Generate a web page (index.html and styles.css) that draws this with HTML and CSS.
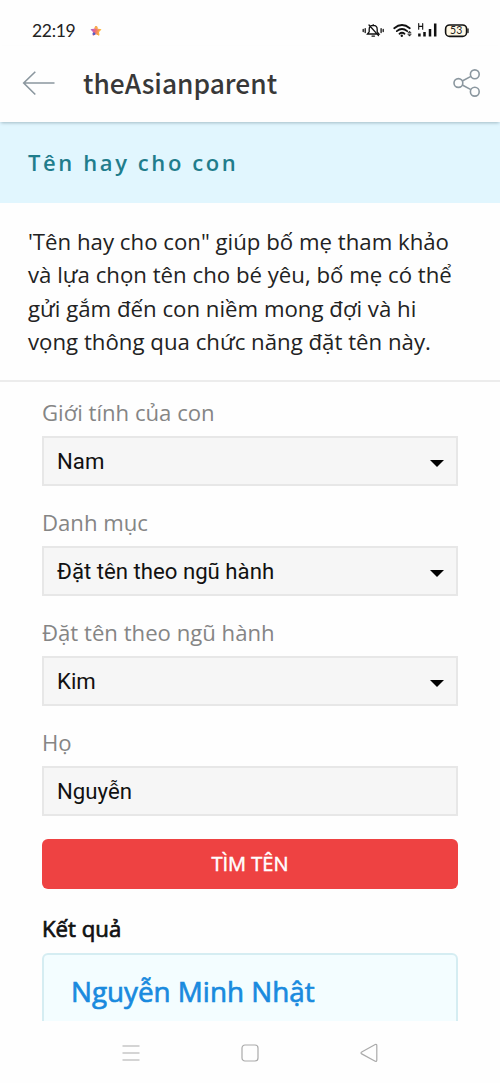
FILE: index.html
```html
<!DOCTYPE html>
<html lang="vi">
<head>
<meta charset="utf-8">
<title>theAsianparent</title>
<link rel="stylesheet" href="styles.css">
</head>
<body>
<div class="status">
  <span class="time">22:19</span>
  <svg class="star" width="12" height="12" viewBox="0 0 12 12"><defs><linearGradient id="sg" x1="0" y1="0" x2="1" y2="0.3"><stop offset="0" stop-color="#8a5be0"/><stop offset=".45" stop-color="#e8628a"/><stop offset="1" stop-color="#ffb62e"/></linearGradient></defs><path d="M6 1.3 7.4 4.2 10.8 4.6 8.5 7 9 10.2 6 8.8 3 10.2 3.5 7 1.2 4.6 4.6 4.2Z" fill="url(#sg)" stroke="url(#sg)" stroke-width="1" stroke-linejoin="round"/><circle cx="6.1" cy="2.5" r="1.5" fill="#f9ad49"/><circle cx="4" cy="8.8" r="1.4" fill="#4e5fc9"/></svg>
  <svg class="sys" width="110" height="20" viewBox="0 0 110 20" fill="none" stroke="#111" stroke-linecap="round">
    <path d="M6.5 14 8.2 11.8V9.2Q8.2 5.6 12.2 5.4 16.2 5.6 16.2 9.2V11.8L18 14ZM11 16.1H13.5M8 5 17.5 15.6M12.2 4.6V5M4.2 8.6V12.6M2.2 9.5V11.6M20.1 8.6V12.6M22.2 9.5V11.6" stroke-width="1.3"/>
    <path d="M33.2 8.2Q41 1.8 48.8 8.2M35.8 11.1Q41 7 46.2 11.1M38.5 13.7Q41 11.8 43.5 13.7" stroke-width="1.8"/>
    <circle cx="40.8" cy="15.7" r="1.2" fill="#111" stroke="none"/>
    <path d="M47 12.8 48.5 11.1 50 12.8ZM47 14.5 48.5 16.2 50 14.5Z" fill="#111" stroke="#111" stroke-width=".5"/>
    <path d="M57.7 3.5V9.2M61.7 3.5V9.2M57.7 6.4H61.7" stroke-width="1.1"/>
    <path d="M58.4 13.5V16.5M63.5 12V16.5M69 9V16.5M74.2 3.5V16.5" stroke-width="2.5" stroke-linecap="butt"/>
    <rect x="84.6" y="5" width="21" height="11.4" rx="4" fill="#fff8e5" stroke-width="1.6"/>
    <path d="M107 9V12.5" stroke-width="1.3"/>
    <text x="95.3" y="14.3" text-anchor="middle" class="batt">53</text>
  </svg>
</div>
<header class="bar">
  <svg class="back" width="34" height="26" viewBox="0 0 34 26" fill="none" stroke="#8b979f" stroke-width="1.6"><path d="M32.5 13H1.5M13.3 1.7 1.7 13 13.3 24.5"/></svg>
  <h1 class="brand">theAsianparent</h1>
  <svg class="share" width="28" height="28" viewBox="0 0 28 28" fill="none" stroke="#8b979f" stroke-width="1.6"><circle cx="5.4" cy="14" r="4.4"/><circle cx="21.8" cy="5.3" r="4.4"/><circle cx="21.8" cy="22.7" r="4.4"/><path d="M9.3 12 17.9 7.4M9.3 16 17.9 20.6"/></svg>
</header>
<div class="heading"><h2 class="heading-text">Tên hay cho con</h2></div>
<div class="intro">
  <div>'Tên hay cho con" giúp bố mẹ tham khảo</div>
  <div>và lựa chọn tên cho bé yêu, bố mẹ có thể</div>
  <div>gửi gắm đến con niềm mong đợi và hi</div>
  <div>vọng thông qua chức năng đặt tên này.</div>
</div>
<main class="form">
  <div class="label"><span>Giới tính của con</span></div>
  <div class="field"><span>Nam</span><i class="caret"></i></div>
  <div class="label"><span>Danh mục</span></div>
  <div class="field"><span>Đặt tên theo ngũ hành</span><i class="caret"></i></div>
  <div class="label"><span>Đặt tên theo ngũ hành</span></div>
  <div class="field"><span>Kim</span><i class="caret"></i></div>
  <div class="label"><span>Họ</span></div>
  <div class="field"><span>Nguyễn</span></div>
  <div class="button"><span>TÌM TÊN</span></div>
  <div class="result-title"><span>Kết quả</span></div>
  <div class="result"><span>Nguyễn Minh Nhật</span></div>
</main>
<nav class="nav">
  <svg width="18" height="18" viewBox="0 0 18 18" fill="none" stroke="#aaa" stroke-width="1.2"><path d="M.5 2H17.5M.5 9H17.5M.5 16H17.5"/></svg>
  <svg width="18" height="18" viewBox="0 0 18 18" fill="none" stroke="#aaa" stroke-width="1.2"><rect x="1" y="1" width="16" height="16" rx="3"/></svg>
  <svg width="18" height="20" viewBox="0 0 18 20" fill="none" stroke="#aaa" stroke-width="1.2" stroke-linejoin="round"><path d="M15.2 1.5 1.7 9Q.3 10 1.7 10.9L15.2 18.3Q16.8 18.8 16.8 17V2.6Q16.8 1 15.2 1.5Z"/></svg>
</nav>
</body>
</html>
```
FILE: styles.css
```css
* { box-sizing: border-box; }
body { margin: 0; width: 500px; height: 1083px; overflow: hidden; background: #fefefe; font-family: "Open Sans", "Noto Sans", sans-serif; display: flex; flex-direction: column; }
h1, h2 { margin: 0; }
.status { height: 46px; flex: none; display: flex; align-items: flex-start; padding: 20px 29px 0 32px; }
.time { font: 17.5px/21px Lato, sans-serif; letter-spacing: -.3px; color: #222; width: 58px; }
.star { margin-top: 5px; }
.sys { margin-left: auto; }
.batt { font: 10.5px Lato, sans-serif; letter-spacing: .3px; fill: #222; stroke: none; }
.bar { height: 76px; flex: none; display: flex; align-items: center; padding: 0 19px 2px 22px; background: #fefefe; box-shadow: 0 2px 3px -1px rgba(70,100,115,.4); position: relative; }
.brand { margin-left: 27px; font: 500 26.35px/38px "Noto Sans CJK SC", sans-serif; color: #383838; white-space: nowrap; }
.share { margin-left: auto; }
.heading { height: 81px; flex: none; background: #e1f6fe; padding: 24px 28px; }
.heading-text { font: 600 22px/32px "Open Sans", sans-serif; letter-spacing: 2.6px; color: #1f7d8c; white-space: nowrap; }
.intro { height: 179px; flex: none; padding: 22px 28px 0; border-bottom: 2px solid #ececec; font-size: 22.22px; line-height: 33.3px; color: #222; white-space: nowrap; }
.form { height: 639px; flex: none; overflow: hidden; padding: 0 42px; white-space: nowrap; }
.label { height: 54px; padding-top: 14px; font-size: 22.15px; line-height: 32px; color: #858585; }
.field + .label { height: 60px; padding-top: 20px; }
.field { height: 50px; border: 2px solid #e7e7e7; background: #f6f6f6; display: flex; align-items: center; justify-content: space-between; padding: 0 12px 0 13px; font: 22.2px/30px Roboto, sans-serif; color: #111; }
.caret { border: 7px solid transparent; border-top-color: #000; border-bottom: 0; margin-top: 4px; }
.button { height: 50px; margin-top: 23px; border-radius: 6px; background: #ee4242; color: #fff; text-align: center; font-size: 20px; line-height: 50px; -webkit-text-stroke: .5px #fff; }
.result-title { height: 64px; padding-top: 24px; font-size: 22.2px; line-height: 32px; color: #111; -webkit-text-stroke: .7px #111; }
.result { height: 100px; border: 2px solid #d5edf2; border-radius: 6px; background: #f3fdff; padding: 15px 27px; font-size: 27.8px; line-height: 42px; color: #198ade; -webkit-text-stroke: .7px #198ade; }
.nav { height: 62px; flex: none; display: flex; justify-content: space-between; align-items: center; padding: 1px 122px 0 122px; }
```
